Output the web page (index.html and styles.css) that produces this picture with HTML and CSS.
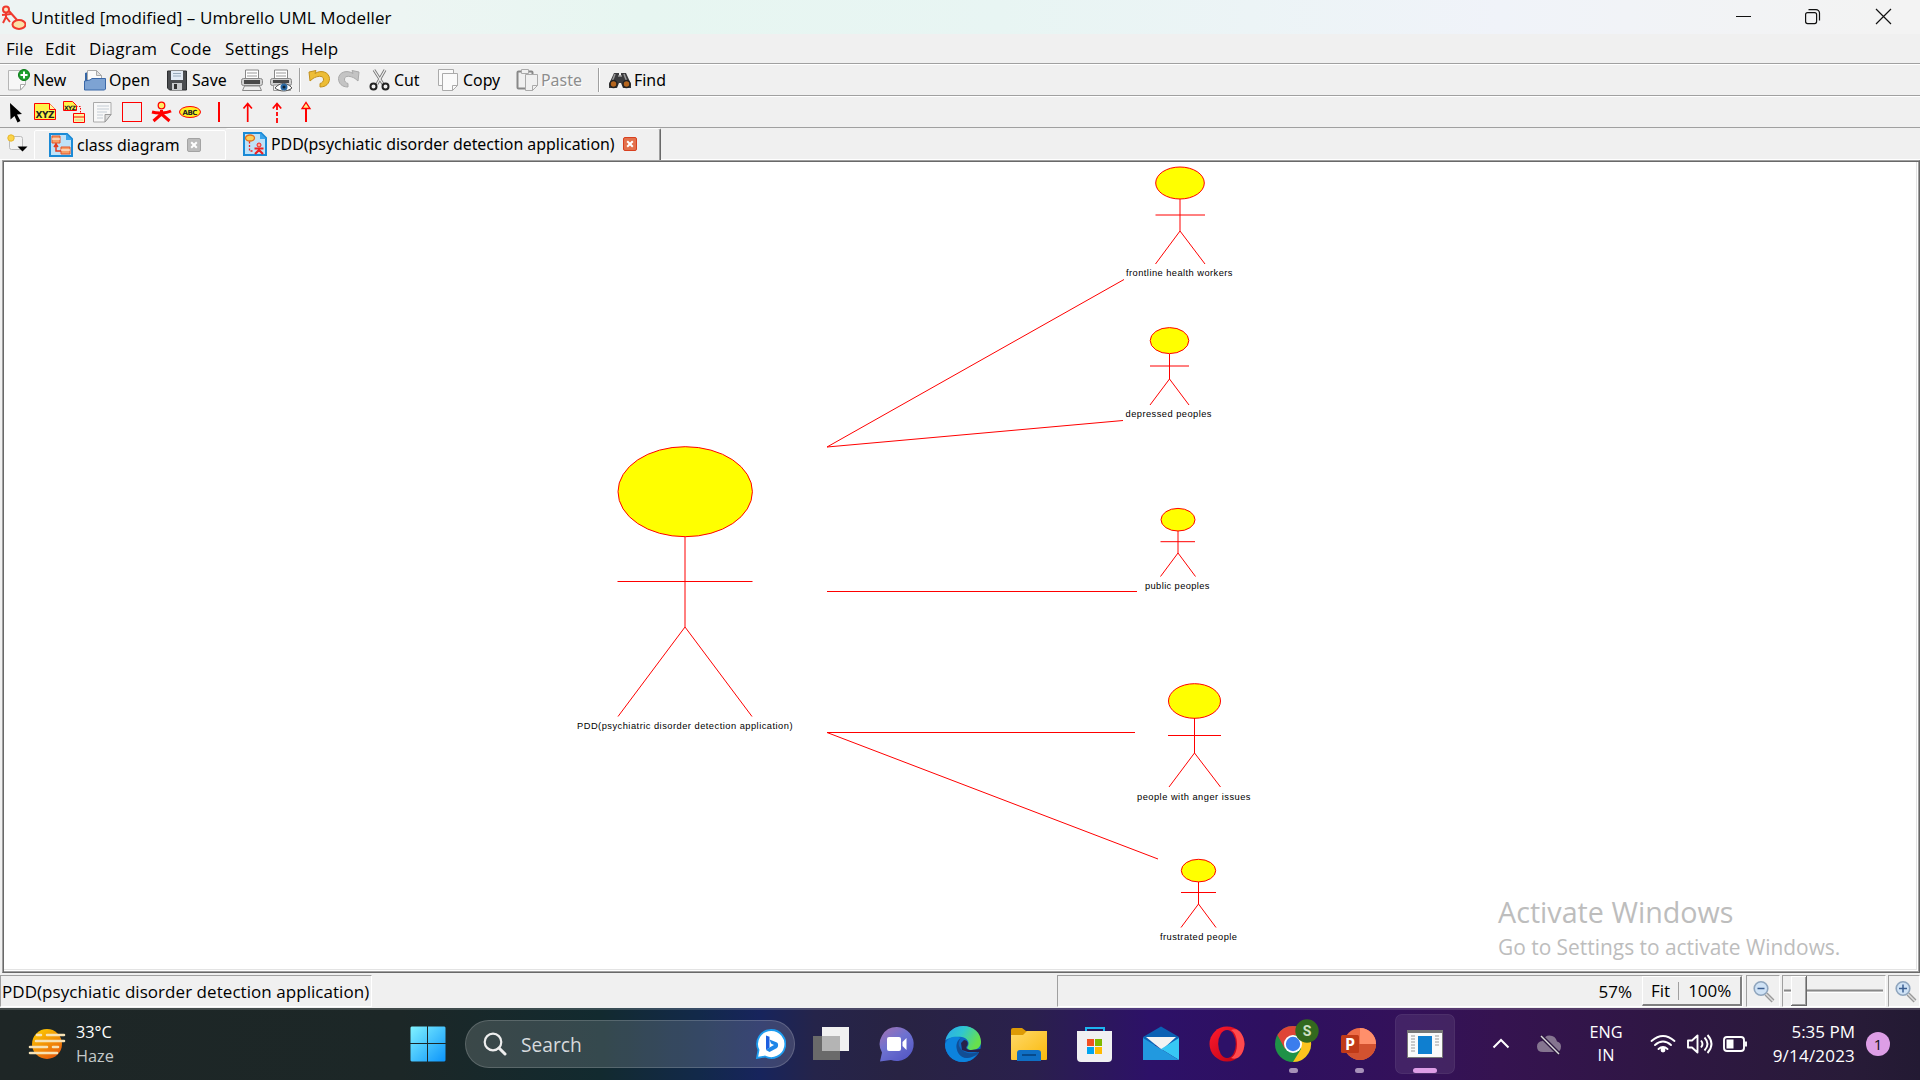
FILE: index.html
```html
<!DOCTYPE html>
<html lang="en">
<head>
<meta charset="utf-8">
<title>Untitled [modified] – Umbrello UML Modeller</title>
<link rel="stylesheet" href="styles.css">
</head>
<body>
<header class="titlebar">
  <svg class="app-icon" width="26" height="26" viewBox="0 3 26 26" fill="none" stroke="#f03a2e" stroke-width="2"><circle cx="6" cy="8.500" r="3" fill="#fbe9c8"/><path d="M2 14l9-1M6 12v4l-3 6M6 16l4 5M9 10l8 9"/><ellipse cx="19" cy="23.500" rx="6.500" ry="4.500" fill="#fbe3a8"/></svg>
  <span class="ui t-title">Untitled [modified] – Umbrello UML Modeller</span>
  <svg class="win-controls" width="192" height="34" viewBox="1728 0 192 34" fill="none" stroke="#111" stroke-width="1.200"><path d="M1736 16.500h15M1876 9l15 15M1891 9l-15 15"/><rect x="1805.600" y="12.600" width="11" height="11" rx="2"/><path d="M1808.500 9.600h7.500a3.500 3.500 0 0 1 3.500 3.500v7.500"/></svg>
</header>
<nav class="menubar ui">
  <span>File</span><span>Edit</span><span>Diagram</span><span>Code</span><span>Settings</span><span>Help</span>
</nav>
<div class="toolbar main tah">
  <div class="tool"><svg width="22" height="24" viewBox="0 0 22 24"><path d="M.500 2.500h17v14l-5 5.500H.500z" fill="#f7f7f7" stroke="#b5b5b5"/><path d="M12.500 22v-5.500h5z" fill="#fff" stroke="#aaa"/><circle cx="16" cy="7" r="5.500" fill="#1da02c" stroke="#0a7a18"/><path d="M16 3.500v7M12.500 7h7" stroke="#fff" stroke-width="2"/></svg><span>New</span></div>
  <div class="tool"><svg width="22" height="24" viewBox="0 0 22 24"><path d="M1 20V5l3-1v10z" fill="#3465a4"/><path d="M3.500 14V2.500h9l5 5V14z" fill="#fafafa" stroke="#aaa"/><path d="M12.500 2.500v5h5z" fill="#e0e0e0" stroke="#aaa"/><path d="M.500 22V13l5.500-1 2-1.500h13.500V21l-1 1z" fill="#7da3d3" stroke="#3b68a8"/></svg><span>Open</span></div>
  <div class="tool"><svg width="22" height="24" viewBox="0 0 22 24"><path d="M.500 3h19v19h-17l-2-2z" fill="#4b4d50" stroke="#2d2f31"/><path d="M4 3h12v9H4z" fill="#e3ebf5"/><path d="M6 5.500h8M6 8h8" stroke="#9ab"/><path d="M5 15h10v7H5z" fill="#c9cbcd"/><path d="M7 16h3v5H7z" fill="#333"/></svg><span>Save</span></div>
  <div class="tool"><svg width="22" height="24" viewBox="0 0 22 24"><path d="M4.500 2h13v9h-13z" fill="#fff" stroke="#888"/><path d="M6 5h10M6 8h10" stroke="#999"/><rect x=".5" y="10.500" width="21" height="7" rx="2" fill="#d0d0d0" stroke="#888"/><path d="M3 12h16v4H3z" fill="#484848"/><path d="M3.500 18h15l2 4.500h-19z" fill="#eee" stroke="#888"/></svg></div>
  <div class="tool"><svg width="22" height="24" viewBox="0 0 22 24"><path d="M4.500 2h13v9h-13z" fill="#fff" stroke="#888"/><path d="M6 5h10M6 8h10" stroke="#999"/><rect x=".5" y="10.500" width="21" height="7" rx="2" fill="#d0d0d0" stroke="#888"/><path d="M3 12h16v3H3z" fill="#484848"/><path d="M3.500 17h17v5.500h-17z" fill="#eee" stroke="#999"/><path d="M5 20c5-6 12-6 17 0-5 4-12 4-17 0z" fill="#fff" stroke="#555"/><circle cx="14" cy="19" r="3.500" fill="#2b6aa3"/><circle cx="14" cy="19" r="1.500" fill="#123"/></svg></div>
  <i class="sep"></i>
  <div class="tool"><svg width="22" height="24" viewBox="0 0 22 24"><path d="M8 2.500L1 4l1 9 3-2.500C9 8 15 7 15.500 11c.3 2.500-1.500 4-3.500 4.500v3.500c6 0 9.500-3.500 9.500-8.500C21 4 13 1.500 7 5.500z" fill="#edbd35" stroke="#c2901c"/></svg></div>
  <div class="tool"><svg width="22" height="24" viewBox="0 0 22 24"><path d="M14 2.500L21 4l-1 9-3-2.500C13 8 7 7 6.500 11c-.3 2.500 1.500 4 3.500 4.500v3.500C4 19 .5 15.500.5 10.500 1 4 9 1.500 15 5.500z" fill="#c4c4c4" stroke="#aaa"/></svg></div>
  <div class="tool"><svg width="22" height="24" viewBox="0 0 22 24" fill="none"><path d="M5 2l9 14M16 2L8 16" stroke="#777" stroke-width="3"/><path d="M5 2l9 14M16 2L8 16" stroke="#eee" stroke-width="1.300"/><circle cx="4.500" cy="18.500" r="3" stroke="#222" stroke-width="2"/><circle cx="16.500" cy="18.500" r="3" stroke="#222" stroke-width="2"/></svg><span>Cut</span></div>
  <div class="tool"><svg width="22" height="24" viewBox="0 0 22 24" fill="#fafafa" stroke="#aaa"><path d="M.500 1.500h15v16h-15z"/><path d="M4.500 5.500h15v12l-5 5h-10z"/><path d="M14.500 22.500v-5h5z"/></svg><span>Copy</span></div>
  <div class="tool off"><svg width="22" height="24" viewBox="0 0 22 24" fill="#f0f0f0" stroke="#aaa"><rect x="1.500" y="3.500" width="15" height="17" rx="1" stroke="#888" stroke-width="2"/><path d="M5.500 1.500h7v4h-7z"/><path d="M9.500 6.500h12v11l-5 5h-7z"/><path d="M16.500 22.500v-5h5z"/></svg><span>Paste</span></div>
  <i class="sep"></i>
  <div class="tool"><svg width="22" height="24" viewBox="0 0 22 24"><path d="M5 5h5v3h2V5h5l5 11v4h-8l-2-5h-2l-2 5H0v-4z" fill="#3b3b3d"/><path d="M6 6l-3 8M15 6l3 8M9 8h4" stroke="#999" stroke-width="1.500"/><circle cx="4.500" cy="16" r="3.500" fill="#b5651d" stroke="#222" stroke-width="1.500"/><circle cx="17.500" cy="16" r="3.500" fill="#b5651d" stroke="#222" stroke-width="1.500"/></svg><span>Find</span></div>
</div>
<div class="toolbar shapes">
  <svg width="330" height="30" viewBox="0 97 330 30" fill="none">
    <path d="M10 103l12 11-5 .5 3.500 6.500-3 1.500-3-6.500-4 3.500z" fill="#000"/>
    <path d="M34.500 103.500h15l6 6v10h-21z" fill="#fef34a" stroke="red"/><path d="M49.500 103.500v6h6" fill="#fff9a0" stroke="red"/><text class="tiny" x="35.500" y="117.500" font-size="9" textLength="19">XYZ</text>
    <path d="M63.500 101.500h9l4 4v5h-13z" fill="#fef34a" stroke="red"/><text class="tiny" x="64" y="109.500" font-size="6" textLength="12">XYZ</text><path d="M76 106.500h4.500v6" stroke="red" stroke-dasharray="1.500 1.500"/><path d="M73.500 113.500h11v9h-11zM73.500 117h11" fill="#fdf6a0" stroke="red"/><path d="M75 120h8" stroke="#cc9"/>
    <path d="M93.500 102.500h17.500v12l-6 7.500H93.500z" fill="#f8f8f8" stroke="#aaa"/><path d="M105 122v-7.500h6z" fill="#ddd" stroke="#999"/><path d="M97 106h12M97 109h12M97 112h10M97 115h6M97 118h6" stroke="#c4ccd4"/>
    <rect x="122.500" y="102.500" width="19" height="19" stroke="red"/>
    <circle cx="161.500" cy="105.500" r="3.300" fill="#fe6" stroke="red" stroke-width="1.300"/><path d="M152 112c5 1.500 14 1.500 19-1M161.500 110v5M161.500 114l-8 7M161.500 114l8 7" stroke="red" stroke-width="3"/>
    <ellipse cx="190" cy="112" rx="10.500" ry="5.500" fill="#ffef20" stroke="red"/><text class="tiny" x="182.500" y="114.800" font-size="7" textLength="15">ABC</text>
    <path d="M219 102v20" stroke="red" stroke-width="2"/>
    <path d="M247.700 122V104M243.500 108.500l4.200-5 4.200 5" stroke="red" stroke-width="1.700"/>
    <path d="M272.800 108.500l4.200-5 4.200 5" stroke="red" stroke-width="1.700"/><path d="M277 104v19" stroke="red" stroke-width="1.800" stroke-dasharray="6 2 4 2"/>
    <path d="M306 122v-13" stroke="red" stroke-width="2"/><path d="M302 108.500l4-6 4 6z" fill="#fe8" stroke="red" stroke-width="1.300"/>
  </svg>
</div>
<div class="tabs tah">
  <div class="newtab"><svg width="34" height="30" viewBox="0 129 34 30"><rect x="9.500" y="137.500" width="13" height="13" rx="2" fill="#f3f3f3" stroke="#bbb"/><circle cx="11" cy="139" r="3.200" fill="#fad34a" stroke="#e8b72a"/><path d="M17.500 147.500h10l-5 5z" fill="#000"/></svg></div>
  <div class="tab">
    <svg width="24" height="24" viewBox="0 0 24 24"><path d="M1 1h17l5 5v17H1z" fill="#bfe2f8" stroke="#1a8ad6" stroke-width="2"/><path d="M17 1v6h6" fill="#3aa3ea"/><path d="M3 3h8v7H3zM12 14h9v7h-9z" fill="#f6a068" stroke="#e2552b"/><path d="M3 6h8M12 17h9" stroke="#fff"/><path d="M7 10v8h5M5 14l2-3 2 3" fill="none" stroke="#e2391c" stroke-width="1.500"/></svg>
    <span>class diagram</span>
    <svg class="close" width="14" height="14" viewBox="0 0 14 14"><rect x=".5" y=".5" width="13" height="13" rx="1.500" fill="#bcbcbc" stroke="#a3a3a3"/><path d="M4.200 4.200l5.600 5.600M9.800 4.200l-5.600 5.600" stroke="#fff" stroke-width="2"/></svg>
  </div>
  <div class="tab active">
    <svg width="24" height="24" viewBox="0 0 24 24"><path d="M1 1h17l5 5v17H1z" fill="#bfe2f8" stroke="#1a8ad6" stroke-width="2"/><path d="M17 1v6h6" fill="#3aa3ea"/><ellipse cx="7" cy="6" rx="4.500" ry="3" fill="#fbd05a" stroke="#e2701c" stroke-width="1.300"/><path d="M6.500 9.500V19h4" fill="none" stroke="#e22" stroke-dasharray="2 1.500" stroke-width="1.300"/><circle cx="16" cy="13" r="2" fill="#fa9" stroke="#e22"/><path d="M11.500 16.500h9M16 16v2l-4 4M16 18l4 4" fill="none" stroke="#e22" stroke-width="2.200"/></svg>
    <span>PDD(psychiatic disorder detection application)</span>
    <svg class="close" width="14" height="14" viewBox="0 0 14 14"><rect x=".5" y=".5" width="13" height="13" rx="1.500" fill="#e3714c" stroke="#d8401f"/><path d="M4.200 4.200l5.600 5.600M9.800 4.200l-5.600 5.600" stroke="#fff" stroke-width="2"/></svg>
  </div>
  <div class="tabs-rest"></div>
</div>
<main class="canvas">
  <svg class="diagram" width="1912" height="807" viewBox="4 162 1912 807">
    <g fill="none" stroke="red">
      <path d="M827 447L1124 279.500M827 447l296-26.500M827 591.500h310M827 732.500h308M827 732.500L1158 859"/>
      <g fill="#ff0"><ellipse cx="1180" cy="183" rx="24.300" ry="16"/><ellipse cx="1169.500" cy="340.600" rx="19.300" ry="13"/><ellipse cx="685.200" cy="491.700" rx="67.200" ry="45"/><ellipse cx="1178" cy="519.700" rx="17" ry="11.300"/><ellipse cx="1194.500" cy="701" rx="26" ry="17.300"/><ellipse cx="1198.500" cy="870.600" rx="17.200" ry="11.300"/></g>
      <path d="M1180 199v32M1155.500 215h49.500M1155.500 264L1180 231l25 33"/>
      <path d="M1169.500 354v25M1150 366h39M1150 405l19.500-26 19.500 26"/>
      <path d="M685 537v90M617.500 581.500h135M618 716.500L685 627l67 89.500"/>
      <path d="M1178 531v22M1160.500 541.700h34.500M1160.500 576.500L1178 553l17.500 23.500"/>
      <path d="M1194.500 718v35M1168 735.500h53M1169 787l25.500-34 26 34"/>
      <path d="M1198.500 882v22M1181 892.500h35M1181 927.500l17.500-23.500 17.500 23.500"/>
    </g>
    <g class="actor-name">
      <text x="1126" y="276" textLength="106.500">frontline health workers</text>
      <text x="1125.500" y="417" textLength="86">depressed peoples</text>
      <text x="577" y="729" textLength="215.500">PDD(psychiatric disorder detection application)</text>
      <text x="1145" y="589" textLength="64.500">public peoples</text>
      <text x="1137" y="800" textLength="113.500">people with anger issues</text>
      <text x="1160" y="940" textLength="77">frustrated people</text>
    </g>
  </svg>
  <div class="activate ui"><div class="act-head">Activate Windows</div><div class="act-sub">Go to Settings to activate Windows.</div></div>
</main>
<footer class="statusbar ui">
  <div class="sunk st-msg"><span>PDD(psychiatic disorder detection application)</span></div>
  <div class="sunk st-zoom"><span class="pct">57%</span><div class="raised"><span>Fit</span><i></i><span>100%</span></div></div>
  <div class="sunk st-out"><svg width="24" height="24" viewBox="0 0 24 24"><path d="M14 14l7 7" stroke="#999" stroke-width="4"/><path d="M14 14l7 7" stroke="#ddd" stroke-width="1.500"/><circle cx="9" cy="8.500" r="6.800" fill="#cfe2f5" stroke="#8fa5bd" stroke-width="1.600"/><path d="M5.500 8.500h7" stroke="#3b5f92" stroke-width="1.500"/></svg></div>
  <div class="sunk st-slider"><svg width="102" height="30" viewBox="0 0 102 30"><path d="M1 14.500h99" stroke="#888" stroke-width="2"/><path d="M1 16.500h99" stroke="#fff"/><path d="M8 0h16v30H8z" fill="#696969"/><path d="M8 0h15v29H8z" fill="#fff"/><path d="M9 1h14v28H9z" fill="#a0a0a0"/><path d="M9 1h13v27H9z" fill="#f0f0f0"/></svg></div>
  <div class="sunk st-in"><svg width="24" height="24" viewBox="0 0 24 24"><path d="M14 14l7 7" stroke="#999" stroke-width="4"/><path d="M14 14l7 7" stroke="#ddd" stroke-width="1.500"/><circle cx="9" cy="8.500" r="6.800" fill="#cfe2f5" stroke="#8fa5bd" stroke-width="1.600"/><path d="M5 8.500h8M9 4.500v8" stroke="#3b5f92" stroke-width="1.500"/></svg></div>
</footer>
<div class="taskbar ui">
  <div class="weather">
    <svg width="38" height="34" viewBox="28 1026 38 34"><defs><linearGradient id="sun" x2=".6" y2="1"><stop offset="0" stop-color="#ffd400"/><stop offset="1" stop-color="#e8600c"/></linearGradient></defs><circle cx="47" cy="1043" r="15" fill="url(#sun)"/><path d="M37 1034h4M47 1034h17M36 1040h28M30 1046h17M53 1046h5M30 1052h27" stroke="#f7e2b5" stroke-width="2.600" stroke-linecap="round"/></svg>
    <div><div class="deg">33°C</div><div class="haze">Haze</div></div>
  </div>
  <svg class="start" width="36" height="36" viewBox="0 0 36 36"><defs><linearGradient id="win" gradientUnits="userSpaceOnUse" x2="36" y2="36"><stop offset="0" stop-color="#82f4ff"/><stop offset="1" stop-color="#0a93fb"/></linearGradient></defs><path d="M1.500 .500H17V17H.500V1.500zM18 .500h16.500l1 1V17H18zM.500 18H17v17.500H1.500l-1-1zM18 18h17.500v16.500l-1 1H18z" fill="url(#win)"/></svg>
  <div class="search">
    <svg width="24" height="24" viewBox="0 0 24 24" fill="none" stroke="#eee" stroke-width="2.200"><circle cx="10" cy="10" r="8.300"/><path d="M16 16l6 6" stroke-width="3" stroke-linecap="round"/></svg>
    <span>Search</span>
    <svg width="30" height="30" viewBox="0 0 30 30"><path d="M15 1a14 14 0 1 1-6 26.500L1 29l1.500-8A14 14 0 0 1 15 1z" fill="#fff" stroke="#1e9df0" stroke-width="1.800"/><path d="M10 6.500l3.500 1.300v10.700L10 21z" fill="#1d5fe0"/><path d="M10 21l3.500-2.500L18 16l-3-1.500-1.500-4 7.500 3c1.500 1 1.500 4 0 5.500L13.500 23z" fill="#1e86e8"/></svg>
  </div>
  <svg class="app" viewBox="-33 -36 66 72"><path d="M-18-8H9v24h-27z" fill="#6a6a6a"/><path d="M-9-17h27V7H-9z" fill="#f1f1f1"/><path d="M-9-8H9V7H-9z" fill="#b4b4b4"/></svg>
  <svg class="app" viewBox="-33 -36 66 72"><defs><linearGradient id="chat" x2=".7" y2="1"><stop offset="0" stop-color="#a571b0"/><stop offset=".5" stop-color="#6e72d0"/><stop offset="1" stop-color="#5558c6"/></linearGradient></defs><path d="M0-17a17 17 0 1 1-6 33l-11 1.500 2-9A17 17 0 0 1 0-17z" fill="url(#chat)"/><rect x="-10" y="-7" width="14" height="14" rx="2" fill="#fff"/><path d="M5.500-2l4-4v12l-4-4z" fill="#fff"/></svg>
  <svg class="app" viewBox="-33 -36 66 72"><defs><linearGradient id="eg" x2="1" y2=".4"><stop offset="0" stop-color="#2ba8ec"/><stop offset=".5" stop-color="#30c6cf"/><stop offset="1" stop-color="#67e04c"/></linearGradient></defs><circle r="18" fill="#0d67c2"/><path d="M-17.500-4C-15-13-8-18 0-18 11-18 18-11 18-2c0 5-4 8-9 8-4 0-6-2-4-4 2-4-1-8-6-9-7-1-13 1-16.500 3z" fill="url(#eg)"/><path d="M-18 0c3-7 10-9 16-6C-7-4-8 4-4 10c4 5 10 5 17 1-3 5-8 7-13 7C-11 18-18 10-18 0z" fill="#0c83dd"/><path d="M-2-6c-5 3-6 10-2 16 4 5 10 5 17 1 2-1 3-3 2-3C8 11-1 9-4 2c-1-3 0-6 2-8z" fill="#124e94"/><path d="M4 2c-2 2 0 4 4 4l10-1v3L5 8-1 6-2-1l3-3c3 0 5 3 3 6z" fill="#28214a"/></svg>
  <svg class="app" viewBox="-33 -36 66 72"><defs><linearGradient id="fo" x2="1" y2="1"><stop offset="0" stop-color="#ffd969"/><stop offset="1" stop-color="#f9b90b"/></linearGradient></defs><path d="M-18-14q0-2 2-2h9l4 3h6v6h-21z" fill="#dd9a05"/><path d="M-18-9h12l4-4h20v28q0 1-1 1h-34q-1 0-1-1z" fill="url(#fo)"/><path d="M-12 17V9q0-3 3-3H9q3 0 3 3v8z" fill="#0f6fc4"/><path d="M-7 11H7" stroke="#074a8b" stroke-width="2"/></svg>
  <svg class="app" viewBox="-33 -36 66 72"><path d="M-9-12v-4H9v4" fill="none" stroke="#1db4f0" stroke-width="2"/><path d="M-18-13h35v27q0 4-4 4h-27q-4 0-4-4z" fill="#f0f0f2"/><path d="M-8-5h7v7h-7z" fill="#f25022"/><path d="M0-5h7v7H0z" fill="#7fba00"/><path d="M-8 3h7v7h-7z" fill="#00a4ef"/><path d="M0 3h7v7H0z" fill="#ffb900"/></svg>
  <svg class="app" viewBox="-33 -36 66 72"><path d="M-18-7L0-17.500 18-7v8h-36z" fill="#0b61b4"/><path d="M-15-7h30L1 6z" fill="#f3f3f3"/><path d="M18-6v22L0 5z" fill="#37c8f5"/><path d="M-18-6L0 5l18 11h-36z" fill="#2299df"/></svg>
  <svg class="app" viewBox="-33 -36 66 72"><defs><linearGradient id="op" x2="1" y2="1"><stop offset="0" stop-color="#ff1b2d"/><stop offset="1" stop-color="#b60014"/></linearGradient></defs><ellipse rx="17.500" ry="17.500" fill="url(#op)"/><path d="M4-14C12-17 17-9 17.500 0 17 9 12 17 4 14 12 10 12-10 4-14z" fill="#ff4a4e"/><ellipse rx="8.800" ry="14" fill="#2d1168"/></svg>
  <svg class="app" viewBox="-33 -36 66 72"><circle r="18" fill="#1f9247"/><path d="M-15.600-9A18 18 0 0 1 15.600-9H0L-8 5z" fill="#df4437"/><path d="M15.600-9A18 18 0 0 1 0 18L8 5 8-9z" fill="#fcc31e"/><circle r="9" fill="#fff"/><circle r="7.200" fill="#3b7ded"/><circle cx="14" cy="-13" r="11.700" fill="#33691e"/><text class="chrome-s" x="14" y="-8">S</text><rect x="-4" y="24" width="9" height="5" rx="2.500" fill="#a791b9"/></svg>
  <svg class="app" viewBox="-33 -36 66 72"><circle cx="1" cy="0" r="16" fill="#ed6c47"/><path d="M1-16a16 16 0 0 1 16 16H1z" fill="#ff8f6b"/><path d="M-15 0h32a16 16 0 0 1-32 0z" fill="#d35230"/><rect x="-18" y="-9" width="18" height="18" rx="1.500" fill="#c03a18"/><text class="ppt" x="-9" y="5.500">P</text><rect x="-4" y="24" width="9" height="5" rx="2.500" fill="#a791b9"/></svg>
  <svg class="app" viewBox="-33 -36 66 72"><rect x="-29.500" y="-29.500" width="59" height="59" rx="6" fill="#fff" fill-opacity=".08" stroke="#fff" stroke-opacity=".09"/><path d="M-18-14h36v28h-36z" fill="#777"/><path d="M-17-11h34v24h-34z" fill="#fafafa"/><path d="M-7-8H7v18H-7z" fill="#0f7fd0"/><path d="M-14-8h4M-14-5h4M-14-2h4M-14 1h4M-14 4h4M-14 7h4M10-8h4M10-5h4M10-2h4M10 1h4" stroke="#bbb" stroke-width="1.500"/><rect x="-12" y="24" width="24" height="5" rx="2.500" fill="#dd9ee6"/></svg>
  <svg class="tray tray-left" width="120" height="72" viewBox="1460 1008 120 72" fill="none"><path d="M1493.500 1047.500l7.500-7.500 7.500 7.500" stroke="#fff" stroke-width="2"/><path d="M1543 1052q-6 0-6-5.500 0-5 5.500-5.500 2-5.500 7-5.500 6 0 7.500 6 4 1 4 5 0 5.500-5.500 5.500z" fill="#857590"/><path d="M1541 1036l18 18" stroke="#2c173f" stroke-width="4"/><path d="M1541 1036l18 18" stroke="#ddd" stroke-width="1.400"/></svg>
  <div class="lang"><div>ENG</div><div>IN</div></div>
  <svg class="tray" width="110" height="72" viewBox="1640 1008 110 72" fill="none" stroke="#fff" stroke-width="1.900"><path d="M1651.500 1041q11.500-10 23 0M1655 1045q8-7 16 0M1658.500 1049q4.500-4 9 0" stroke-linecap="round"/><circle cx="1663" cy="1050" r="1.500" fill="#fff"/><path d="M1688 1040.500h4l5.500-5v17l-5.500-5h-4zM1701 1040.500q3 3.500 0 7M1704.500 1037.500q6 6.500 0 13M1707.500 1035q8 9 0 18" stroke-linejoin="round"/><rect x="1724" y="1037" width="20" height="14" rx="3"/><path d="M1726.500 1039.500h7v9h-7z" fill="#fff" stroke="none"/><path d="M1746 1041.500v5"/></svg>
  <div class="clock"><div>5:35 PM</div><div class="date">9/14/2023</div></div>
  <div class="badge">1</div>
</div>
</body>
</html>
```
FILE: styles.css
```css
* { box-sizing: border-box; }
body { margin: 0; width: 1920px; height: 1080px; overflow: hidden; background: #f0f0f0; color: #000; display: flex; flex-direction: column; }
svg { display: block; flex: none; }
.ui { font-family: "Open Sans", "Noto Sans", sans-serif; font-size: 17px; white-space: nowrap; }
.tah { font-family: "Noto Sans", "Open Sans", sans-serif; font-size: 15.9px; white-space: nowrap; }

.titlebar { height: 34px; flex: none; display: flex; align-items: center; background: linear-gradient(90deg, #edf4f3 0, #edf5f3 400px, #e7f6f1 640px, #e8f5f3 1000px, #f0f3f9 1500px, #f3f3f3 1880px); }
.t-title { margin-left: 5px; letter-spacing: 0.09px; }
.win-controls { margin-left: auto; }

.menubar { height: 29px; flex: none; padding: 1px 0 0 6px; display: grid; grid-template-columns: 39px 44px 81px 55px 76px 60px; line-height: 28px; letter-spacing: 0.1px; }

.toolbar { height: 32px; border-top: 1px solid #a0a0a0; box-shadow: inset 0 1px #fff; display: flex; align-items: center; flex: none; }
.main { display: grid; grid-template-columns: 76px 83px 74px 29px 29px 9px 30px 31px 69px 78px 82px 11px 80px; padding-left: 8px; }
.tool { display: flex; align-items: center; gap: 3px; height: 30px; }
.off { color: #8d8d8d; text-shadow: 1px 1px #fff; }
.sep { width: 2px; height: 24px; background: #a0a0a0; border-right: 1px solid #fff; }
.tiny { font-family: "DejaVu Sans", sans-serif; font-weight: bold; fill: #222; }

.tabs { height: 33px; border-top: 1px solid #a0a0a0; display: flex; align-items: stretch; flex: none; }
.newtab { width: 34px; border-bottom: 1px solid #fff; }
.tab { width: 192px; margin-top: 2px; padding-left: 14px; display: flex; align-items: center; gap: 4px; border: 1px solid #fff; border-radius: 2px 2px 0 0; }
.close { margin-left: 3px; }
.active { width: 435px; margin-top: 0; padding: 0 0 2px 17px; gap: 4px; border: 0; border-top: 1px solid #fff; border-right: 1px solid #696969; box-shadow: inset -1px 0 #a0a0a0; }
.active .close { margin-left: 4px; }
.tabs-rest { flex: 1; border-bottom: 1px solid #fff; }

.canvas { position: relative; height: 813px; margin-left: 2px; flex: none; background: #fff; border: 1px solid #a0a0a0; border-right-color: #696969; border-bottom-color: #696969; box-shadow: inset 1px 1px #696969, inset -1px -1px #a0a0a0, inset -2px -2px #fff, inset -3px -3px #e3e3e3; padding: 1px; overflow: hidden; }
.diagram { margin-right: 1px; }
.actor-name { font: 9.3px "Liberation Sans", Arial, sans-serif; fill: #000; }
.activate { position: absolute; left: 1495px; top: 732px; color: #bdbdbd; }
.act-head { font-size: 28.700px; line-height: 38px; }
.act-sub { font-size: 20.900px; line-height: 32px; }

.statusbar { height: 35px; padding-top: 2px; display: grid; grid-template-columns: 372px 685px 686px 3px 34px 2px 104px 2px 32px; flex: none; line-height: 30px; }
.sunk { height: 32px; border: 1px solid #a0a0a0; border-right-color: #fff; border-bottom-color: #fff; display: flex; align-items: center; }
.sunk span { padding-top: 1px; }
.st-msg { padding-left: 1px; letter-spacing: 0.05px; }
.st-zoom { grid-column: 3; justify-content: flex-end; }
.pct { margin-right: 10px; }
.raised { width: 100px; height: 30px; padding-left: 8px; display: flex; align-items: center; border: 1px solid #fff; border-right: 2px solid #808080; border-bottom: 2px solid #808080; }
.raised i { width: 1px; height: 18px; margin: 0 9px 0 8px; background: #a0a0a0; }
.st-out { grid-column: 5; padding: 2px 0 0 5px; }
.st-slider { grid-column: 7; }
.st-in { grid-column: 9; padding: 2px 0 0 5px; }

.taskbar { height: 72px; flex: none; color: #fff; font-size: 16.300px; display: flex; align-items: center; border-top: 2px solid #ffffff2b; padding-bottom: 2px; background-origin: border-box; background-image: linear-gradient(90deg, #1e2626 0, #1c2727 400px, #122a2f 600px, #12294a 700px, #17245c 760px, #25244a 815px, #282343 900px, #2a204c 1030px, #2d1168 1150px, #2e1060 1270px, #33115a 1400px, #351350 1500px, #2e1742 1680px, #281b38 1850px, #231a33 1920px); }
.weather { width: 382px; padding-left: 28px; display: flex; align-items: center; gap: 10px; line-height: 24px; }
.haze { color: #c4c9c9; }
.start { margin: 0 19px 0 28px; }
.search { width: 330px; height: 48px; border: 1px solid #ffffff2b; border-radius: 24px; background: #ffffff26; display: flex; align-items: center; padding: 0 8px 0 17px; color: #d6dadd; font-size: 19.200px; }
.search span { margin-left: 14px; flex: 1; }
.app { width: 66px; height: 72px; }
.search + .app { margin-left: 3px; }
.chrome-s { font: bold 14px Roboto, sans-serif; fill: #cfe0c4; text-anchor: middle; }
.ppt { font: bold 16px "Open Sans", sans-serif; fill: #fff; text-anchor: middle; }
.tray-left { margin-left: 2px; }
.lang { width: 52px; margin-right: 8px; text-align: center; line-height: 23px; }
.clock { width: 105px; text-align: right; line-height: 24px; font-size: 17px; }
.date { letter-spacing: 0.2px; }
.badge { width: 24px; height: 24px; margin-left: 11px; border-radius: 50%; background: #dd9ee6; color: #111; text-align: center; line-height: 24px; font-size: 15px; }
```
